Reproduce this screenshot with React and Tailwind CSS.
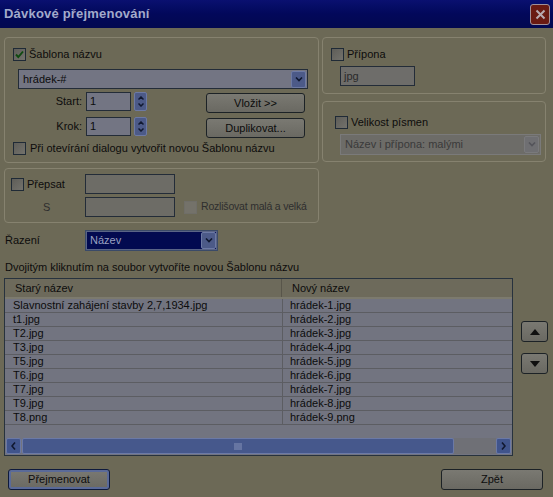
import React from 'react';

const ROWS = [
  ['Slavnostní zahájení stavby 2,7,1934.jpg', 'hrádek-1.jpg'],
  ['t1.jpg', 'hrádek-2.jpg'],
  ['T2.jpg', 'hrádek-3.jpg'],
  ['T3.jpg', 'hrádek-4.jpg'],
  ['T5.jpg', 'hrádek-5.jpg'],
  ['T6.jpg', 'hrádek-6.jpg'],
  ['T7.jpg', 'hrádek-7.jpg'],
  ['T9.jpg', 'hrádek-8.jpg'],
  ['T8.png', 'hrádek-9.png'],
];

function Check({ checked, disabled }) {
  return (
    <span
      className={`w-[13px] h-[13px] shrink-0 border flex items-center justify-center ${
        disabled ? 'border-[#6f6e68] bg-[#74726a]' : 'border-[#1f2a36] bg-gradient-to-br from-[#5e5d58] to-[#73726c]'
      }`}
    >
      {checked && (
        <svg width="9" height="9" viewBox="0 0 9 9">
          <path d="M1 4.5 L3.3 7 L8 1.5" stroke="#0f4a10" strokeWidth="1.9" fill="none" />
        </svg>
      )}
    </span>
  );
}

function Chevron({ up, color = '#101828' }) {
  return (
    <svg width="8" height="5" viewBox="0 0 8 5">
      <path d={up ? 'M1 4.5 L4 1.5 L7 4.5' : 'M1 0.5 L4 3.5 L7 0.5'} stroke={color} strokeWidth="1.6" fill="none" />
    </svg>
  );
}

function DropBtn({ disabled }) {
  return (
    <span
      className={`w-[15px] h-[17px] rounded-[2px] flex items-center justify-center ${
        disabled ? 'bg-[#6f6f72] border border-[#7a7a7c]' : 'bg-[#4c5a88] border border-[#6c79a4]'
      }`}
    >
      <Chevron color={disabled ? '#54545a' : '#101830'} />
    </span>
  );
}

function Spin() {
  return (
    <div className="w-[13px] h-[19px] ml-[3px] bg-[#4c5a88] border border-[#6c79a4] rounded-[2px] flex flex-col items-center justify-center gap-[3px]">
      <svg width="6" height="4" viewBox="0 0 6 4"><path d="M0.5 3.5 L3 1 L5.5 3.5" stroke="#101830" strokeWidth="1.5" fill="none" /></svg>
      <svg width="6" height="4" viewBox="0 0 6 4"><path d="M0.5 0.5 L3 3 L5.5 0.5" stroke="#101830" strokeWidth="1.5" fill="none" /></svg>
    </div>
  );
}

function Button({ children, className = '', primary }) {
  return (
    <div
      className={`h-[20px] rounded-[3px] border flex items-center justify-center bg-gradient-to-b from-[#7a7972] to-[#6a6962] ${
        primary ? 'border-[#0e1a3c] shadow-[inset_0_0_0_2px_#5a6a98]' : 'border-[#1c2226]'
      } ${className}`}
    >
      {children}
    </div>
  );
}

export default function App() {
  return (
    <div className="w-[553px] h-[497px] bg-[#6c6956] font-['Liberation_Sans',Arial,sans-serif] text-[11px] text-[#0c0c0c] overflow-hidden">
      {/* Title bar */}
      <div className="h-[28px] bg-gradient-to-b from-[#0a1070] via-[#02085a] to-[#020850] flex items-center justify-between pl-[4px] pr-[3px]">
        <span className="text-[13px] font-bold text-[#a2aacb] tracking-[0.2px]">Dávkové přejmenování</span>
        <span className="w-[20px] h-[21px] rounded-[3px] bg-[#6a1a12] border border-[#a09098] flex items-center justify-center">
          <svg width="11" height="11" viewBox="0 0 11 11">
            <path d="M1.5 1.5 L9.5 9.5 M9.5 1.5 L1.5 9.5" stroke="#b8aab0" strokeWidth="2" />
          </svg>
        </span>
      </div>

      <div className="px-[4px] pt-[9px]">
        <div className="flex gap-[3px]">
          {/* Šablona group */}
          <div className="w-[315px] h-[126px] border border-[#86826f] rounded-[4px] pl-[8px] pt-[10px]">
            <div className="flex items-center gap-[3px] h-[13px]">
              <Check checked />
              <span>Šablona názvu</span>
            </div>
            <div className="ml-[5px] mt-[8px] w-[290px] h-[20px] border border-[#232c38] bg-[#737583] flex items-center justify-between pl-[4px] pr-[1px]">
              <span>hrádek-#</span>
              <DropBtn />
            </div>
            <div className="flex mt-[3px]">
              <div className="flex flex-col gap-[6px]">
                <div className="flex items-center h-[19px]">
                  <span className="w-[69px] text-right">Start:</span>
                  <span className="ml-[4px] w-[45px] h-[19px] border border-[#232c38] bg-[#737583] pl-[3px] leading-[17px]">1</span>
                  <Spin />
                </div>
                <div className="flex items-center h-[19px]">
                  <span className="w-[69px] text-right">Krok:</span>
                  <span className="ml-[4px] w-[45px] h-[19px] border border-[#232c38] bg-[#737583] pl-[3px] leading-[17px]">1</span>
                  <Spin />
                </div>
              </div>
              <div className="ml-[59px] mt-[1px] flex flex-col gap-[5px]">
                <Button className="w-[99px]">Vložit &gt;&gt;</Button>
                <Button className="w-[99px]">Duplikovat...</Button>
              </div>
            </div>
            <div className="flex items-center gap-[4px] mt-[4px] h-[13px]">
              <Check />
              <span>Při otevírání dialogu vytvořit novou Šablonu názvu</span>
            </div>
          </div>

          {/* Right column */}
          <div className="w-[224px] flex flex-col gap-[7px]">
            <div className="h-[57px] border border-[#86826f] rounded-[4px] pl-[8px] pt-[10px]">
              <div className="flex items-center gap-[3px] h-[13px]">
                <Check />
                <span>Přípona</span>
              </div>
              <div className="ml-[9px] mt-[5px] w-[75px] h-[20px] border border-[#232c38] bg-[#6e6d6a] pl-[3px] leading-[18px] text-[#2a2a2a]">
                jpg
              </div>
            </div>
            <div className="h-[61px] border border-[#86826f] rounded-[4px] pl-[12px] pt-[14px]">
              <div className="flex items-center gap-[3px] h-[13px]">
                <Check />
                <span>Velikost písmen</span>
              </div>
              <div className="ml-[5px] mt-[5px] w-[201px] h-[21px] border border-[#7a7a7a] bg-[#6d6c68] flex items-center justify-between pl-[4px] pr-[1px] text-[#3a3a3a]">
                <span>Název i přípona: malými</span>
                <DropBtn disabled />
              </div>
            </div>
          </div>
        </div>

        {/* Přepsat group */}
        <div className="mt-[5px] w-[315px] h-[55px] border border-[#86826f] rounded-[4px] pl-[6px] pt-[5px] flex overflow-hidden">
          <div className="w-[74px] flex flex-col">
            <div className="flex items-center gap-[3px] h-[20px]">
              <Check />
              <span>Přepsat</span>
            </div>
            <div className="h-[20px] mt-[3px] pl-[32px] flex items-center text-[#2e2e2e]">S</div>
          </div>
          <div className="flex flex-col gap-[3px]">
            <span className="w-[90px] h-[20px] border border-[#232c38] bg-[#6d6c66]" />
            <div className="flex items-center">
              <span className="w-[90px] h-[20px] border border-[#232c38] bg-[#6d6c66]" />
              <span className="ml-[9px]"><Check disabled /></span>
              <span className="ml-[4px] whitespace-nowrap text-[10.5px] tracking-[-0.2px] text-[#2e2e2e]">Rozlišovat malá a velká</span>
            </div>
          </div>
        </div>

        {/* Řazení */}
        <div className="mt-[7px] flex items-center h-[21px]">
          <span className="w-[81px] pl-[1px]">Řazení</span>
          <div className="w-[133px] h-[21px] border border-[#3a4a68] bg-[#020a50] shadow-[inset_0_0_0_1px_#5a6486] flex items-center justify-between pl-[4px] pr-[1px]">
            <span className="text-[#9aa0c0]">Název</span>
            <DropBtn />
          </div>
        </div>
        <div className="mt-[9px] pl-[1px] h-[14px] leading-[14px]">Dvojitým kliknutím na soubor vytvoříte novou Šablonu názvu</div>

        {/* List + arrows */}
        <div className="mt-[4px] flex">
          <div className="w-[509px] h-[178px] border border-[#27323e] bg-[#727480] flex flex-col">
            <div className="h-[20px] flex bg-[#6d6a5b] border-b-[2px] border-[#7c7a6e] shrink-0">
              <span className="w-[277px] pl-[10px] leading-[18px] border-r border-[#58554a]">Starý název</span>
              <span className="pl-[10px] leading-[18px]">Nový název</span>
            </div>
            <div className="flex-1">
              {ROWS.map(([a, b]) => (
                <div key={a} className="h-[14px] flex border-b border-[#5c5d62] leading-[13px]">
                  <span className="w-[277px] pl-[8px] whitespace-nowrap">{a}</span>
                  <span className="pl-[7px] border-l border-[#5c5d62]">{b}</span>
                </div>
              ))}
            </div>
            <div className="h-[16px] mb-[1px] flex shrink-0 px-[1px]">
              <span className="w-[15px] h-[16px] bg-[#40548c] border border-[#6a78a6] rounded-[2px] flex items-center justify-center">
                <svg width="5" height="8" viewBox="0 0 5 8"><path d="M4 0.5 L1 4 L4 7.5" stroke="#101830" strokeWidth="1.6" fill="none" /></svg>
              </span>
              <span className="ml-[1px] w-[432px] h-[16px] bg-[#46588c] border border-[#6b79a6] rounded-[2px] flex items-center justify-center">
                <svg width="8" height="7" viewBox="0 0 8 7"><path d="M1 0 V7 M3 0 V7 M5 0 V7 M7 0 V7" stroke="#8692b8" strokeWidth="1" /></svg>
              </span>
              <span className="flex-1 bg-[#6f7076]" />
              <span className="w-[15px] h-[16px] bg-[#40548c] border border-[#6a78a6] rounded-[2px] flex items-center justify-center">
                <svg width="5" height="8" viewBox="0 0 5 8"><path d="M1 0.5 L4 4 L1 7.5" stroke="#101830" strokeWidth="1.6" fill="none" /></svg>
              </span>
            </div>
          </div>
          <div className="ml-[8px] pt-[43px] flex flex-col gap-[11px]">
            <Button className="w-[27px] !h-[21px]">
              <svg width="10" height="6" viewBox="0 0 10 6"><path d="M0 6 L5 0 L10 6 Z" fill="#101010" /></svg>
            </Button>
            <Button className="w-[27px] !h-[21px]">
              <svg width="10" height="6" viewBox="0 0 10 6"><path d="M0 0 L5 6 L10 0 Z" fill="#101010" /></svg>
            </Button>
          </div>
        </div>

        {/* Bottom buttons */}
        <div className="mt-[13px] flex justify-between pl-[4px] pr-[6px]">
          <Button primary className="w-[102px] !h-[21px]">Přejmenovat</Button>
          <Button className="w-[102px] !h-[21px]">Zpět</Button>
        </div>
      </div>
    </div>
  );
}
